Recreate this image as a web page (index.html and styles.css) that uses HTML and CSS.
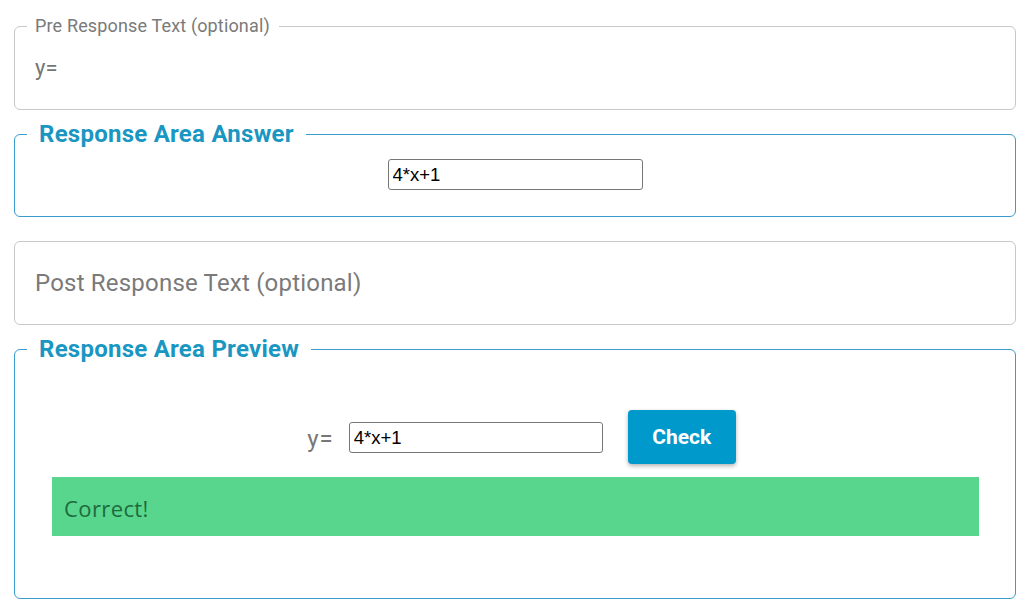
FILE: index.html
```html
<!DOCTYPE html>
<html>
<head>
<meta charset="utf-8">
<link rel="stylesheet" href="styles.css">
</head>
<body>
<div class="page">
  <fieldset class="box box-pre">
    <legend class="legend-gray">Pre Response Text (optional)</legend>
    <div class="pre-text">y=</div>
  </fieldset>

  <fieldset class="box box-blue box-answer">
    <legend class="legend-blue">Response Area Answer</legend>
    <div class="answer-row">
      <input class="field" type="text" value="4*x+1">
    </div>
  </fieldset>

  <fieldset class="box box-post">
    <div class="post-text">Post Response Text (optional)</div>
  </fieldset>

  <fieldset class="box box-blue box-preview">
    <legend class="legend-blue legend-preview">Response Area Preview</legend>
    <div class="preview-row">
      <span class="pre-label">y=</span>
      <input class="field field-preview" type="text" value="4*x+1">
      <button class="check-btn">Check</button>
    </div>
    <div class="feedback">Correct!</div>
  </fieldset>
</div>
</body>
</html>
```

FILE: styles.css
```css
* { box-sizing: border-box; }
html, body { margin: 0; padding: 0; background: #ffffff; }
body { font-family: Roboto, "Liberation Sans", sans-serif; }

.page {
  padding: 16px 14px 0 14px;
  display: flex;
  flex-direction: column;
}

.box {
  margin: 0;
  border: 1px solid #c8c8c8;
  border-radius: 6px;
  padding: 0 20px;
  min-width: 0;
}

.box-blue { border-color: #3a9ccc; }

.legend-gray {
  margin-left: -8px;
  padding: 0 9px 0 8px;
  font-size: 18px;
  line-height: 20px;
  letter-spacing: 0.15px;
  color: #7a7a7a;
}

.legend-blue {
  margin-left: -8px;
  padding: 0 12px;
  font-size: 24px;
  line-height: 26px;
  font-weight: 700;
  letter-spacing: 0.25px;
  color: #1a96c2;
}
.legend-preview { margin-left: -25px; }

.box-pre { padding-top: 20px; padding-bottom: 29px; }
.pre-text {
  font-size: 22px;
  line-height: 24px;
  color: #757575;
}

.box-answer { margin-top: 11px; padding-top: 12px; padding-bottom: 26px; }
.answer-row { display: flex; justify-content: center; }

.field {
  font-family: "Liberation Sans", Arial, sans-serif;
  font-size: 18.5px;
  color: #000;
  border: 1px solid #767676;
  border-radius: 3px;
  padding: 1px 4px 0 4px;
  margin: 0;
  outline: none;
  background: #fff;
}
.answer-row .field { width: 255px; height: 31px; }

.box-post { margin-top: 24px; padding-top: 27px; padding-bottom: 27px; }
.post-text {
  font-size: 24px;
  line-height: 28px;
  letter-spacing: 0.2px;
  color: #7a7a7a;
}

.box-preview { margin-top: 11px; padding: 48px 36px 62px 37px; }

.preview-row {
  display: flex;
  align-items: center;
  justify-content: center;
  padding-left: 12px;
  height: 54px;
}
.pre-label {
  font-size: 24px;
  letter-spacing: 1px;
  color: #777;
  margin-right: 15px;
  padding-top: 4px;
}
.field-preview { width: 254px; height: 31px; }

.check-btn {
  margin-left: 25px;
  width: 108px;
  height: 54px;
  border: none;
  border-radius: 4px;
  background: #0099cc;
  color: #fff;
  font-family: Roboto, "Liberation Sans", sans-serif;
  font-size: 21px;
  font-weight: 700;
  box-shadow: 0 2px 4px rgba(0, 0, 0, 0.3);
  cursor: pointer;
}

.feedback {
  margin-top: 13px;
  height: 59px;
  background: #58d68d;
  color: #1d6b3c;
  font-family: "Open Sans", "Noto Sans", sans-serif;
  font-size: 22px;
  line-height: 62px;
  letter-spacing: 0.4px;
  padding-left: 12px;
}
```
